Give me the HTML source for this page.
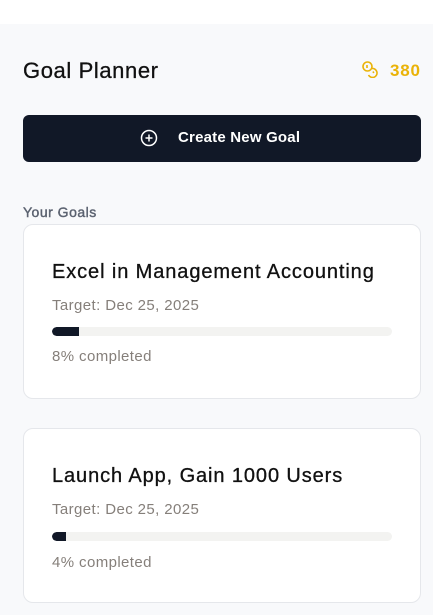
<!DOCTYPE html>
<html><head><style>
*{margin:0;padding:0;box-sizing:border-box}
body{width:433px;height:615px;overflow:hidden;background:#fff;font-family:"Liberation Sans",sans-serif;position:relative}
.bg{position:absolute;left:0;top:24px;width:433px;height:591px;background:#f8f9fb}
.abs{position:absolute;white-space:nowrap}
.title{left:23px;top:57px;font-size:22px;color:#111;line-height:27px;letter-spacing:0.6px;-webkit-text-stroke:0.3px #111}
.pts{left:390px;top:61px;font-size:17px;font-weight:bold;color:#eab308;line-height:20px;letter-spacing:0.8px}
.btn{position:absolute;left:23px;top:115px;width:398px;height:47px;background:#111827;border-radius:6px}
.btxt{left:178px;top:129px;color:#fff;font-size:15px;font-weight:bold;letter-spacing:0.2px;line-height:18px}
.yg{left:23px;top:203px;font-size:14px;color:#5b6270;line-height:18px;letter-spacing:0.5px;-webkit-text-stroke:0.4px #5b6270}
.card{position:absolute;left:23px;width:398px;height:175px;background:#fff;border:1px solid #e5e7eb;border-radius:10px}
.ct{font-size:20px;color:#111;line-height:24px;letter-spacing:0.9px;-webkit-text-stroke:0.3px #111}
.tg{font-size:15px;color:#857f7a;line-height:18px;letter-spacing:0.4px}
.bar{position:absolute;left:52px;width:340px;height:9px;border-radius:5px;background:#f3f3f1;overflow:hidden}
.bar div{height:100%;background:#111827;border-radius:5px 0 0 5px}
</style></head><body>
<div class="bg"></div>
<div class="abs title">Goal Planner</div>
<svg class="abs" style="left:361px;top:60px" width="18" height="18" viewBox="0 0 18 18" fill="none" stroke="#eab308" stroke-width="1.6"><circle cx="6.5" cy="6.5" r="4.5"/><path d="M6 5v3"/><path d="M11 8.5a4.5 4.5 0 1 1-3.5 6.5"/><path d="M12 11.5l0.8 1.5"/></svg>
<div class="abs pts">380</div>
<div class="btn"></div>
<svg class="abs" style="left:140px;top:129px" width="18" height="18" viewBox="0 0 18 18" fill="none" stroke="#fff" stroke-width="1.5"><circle cx="9" cy="9" r="7.5"/><path d="M9 5.5v7M5.5 9h7"/></svg>
<div class="abs btxt">Create New Goal</div>
<div class="abs yg">Your Goals</div>

<div class="card" style="top:224px"></div>
<div class="abs ct" style="left:52px;top:260px">Excel in Management Accounting</div>
<div class="abs tg" style="left:52px;top:297px">Target: Dec 25, 2025</div>
<div class="bar" style="top:327px"><div style="width:27px"></div></div>
<div class="abs tg" style="left:52px;top:348px">8% completed</div>

<div class="card" style="top:428px"></div>
<div class="abs ct" style="left:52px;top:464px">Launch App, Gain 1000 Users</div>
<div class="abs tg" style="left:52px;top:501px">Target: Dec 25, 2025</div>
<div class="bar" style="top:532px"><div style="width:14px"></div></div>
<div class="abs tg" style="left:52px;top:554px">4% completed</div>
</body></html>
